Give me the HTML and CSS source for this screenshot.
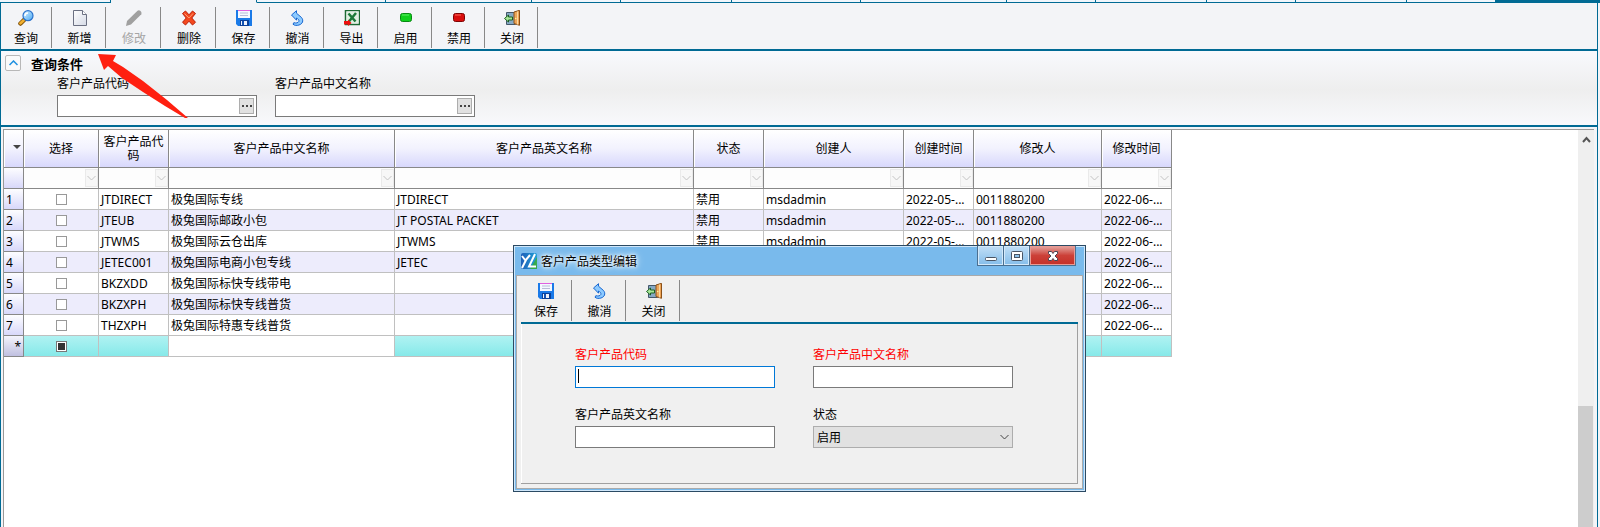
FILE: index.html
```html
<!DOCTYPE html>
<html lang="zh-CN">
<head>
    <meta charset="UTF-8">
    <meta name="viewport" content="width=device-width, initial-scale=1.0">
    <title>客户产品类型</title>
    <link rel="stylesheet" href="styles.css">
</head>
<body>
    <!-- 图标定义 -->
    <svg class="icon-defs" aria-hidden="true">
        <defs>
            <linearGradient id="g-blue" x1="0" y1="0" x2="1" y2="1">
                <stop offset="0" stop-color="#d8f2ff"/>
                <stop offset="1" stop-color="#4aa8f4"/>
            </linearGradient>
            <linearGradient id="g-page" x1="0" y1="0" x2="1" y2="1">
                <stop offset="0" stop-color="#fff"/>
                <stop offset="1" stop-color="#d5dae6"/>
            </linearGradient>
            <linearGradient id="g-logo" x1="0" y1="0" x2="1" y2="0">
                <stop offset="0" stop-color="#1f5fb8"/>
                <stop offset="1" stop-color="#1e9fd8"/>
            </linearGradient>
        </defs>
        <symbol id="i-search" viewBox="0 0 16 16">
            <path d="M6 10l-3.500 3.500" stroke="#7a4a00" stroke-width="4.500" stroke-linecap="round"/>
            <path d="M5.500 10.500L2.500 13.300" stroke="#f0b030" stroke-width="2.800" stroke-linecap="round"/>
            <circle cx="10" cy="5.700" r="5" fill="url(#g-blue)" stroke="#2a72cc" stroke-width="1.200"/>
            <path d="M7 6a3 3 0 0 1 3-3" stroke="#fff" stroke-width="1.500" fill="none"/>
        </symbol>
        <symbol id="i-new" viewBox="0 0 16 16">
            <path d="M1.500.5h9l4 4v11h-13z" fill="url(#g-page)" stroke="#6b7082"/>
            <path d="M10.500.5v4h4" fill="#fff" stroke="#6b7082"/>
        </symbol>
        <symbol id="i-edit" viewBox="0 0 16 16">
            <path d="M0 16l1-5L11.500.7q1.500-1 3 .3t.8 3.200L5 14.600z" fill="#a0a0a0"/>
        </symbol>
        <symbol id="i-delete" viewBox="0 0 16 16">
            <path d="M1.500 3.500l3-2.500L8 4.800 11.500 1l3 2.500L10.800 8l3.700 4.300-3 2.700L8 11.200 4.500 15l-3-2.700L5.200 8z" fill="#f4481e" stroke="#b8200a"/>
            <path d="M3.500 3.500L8 8l4-4.500" stroke="#ff9a70" fill="none"/>
        </symbol>
        <symbol id="i-save" viewBox="0 0 16 16">
            <path d="M0 0h16v16H2l-2-2z" fill="#1a7ae8"/>
            <path d="M2 0h12v8H2z" fill="#f4f8ff"/>
            <path d="M2 0h12v1H2z" fill="#e060e0"/>
            <path d="M4 3h8M4 5.500h8" stroke="#b8bcd8"/>
            <path d="M4 10h9v6H4z" fill="#0b3f98"/>
            <path d="M5 11h6v4H5z" fill="#eef2fb"/>
            <path d="M6 11h2v4H6z" fill="#1252b4"/>
        </symbol>
        <symbol id="i-undo" viewBox="0 0 16 16">
            <path d="M1.500 5L6.500.7v2.500l5 4.300c2.500 3 1 6.500-2.500 7.500-2.300.7-4.500.6-6-.8l.8-1.500c2.200.6 4.400.2 5-1.200.5-1.300-.5-2.500-2.300-3.500v2.200z" fill="#8ccaff" stroke="#1766d0"/>
        </symbol>
        <symbol id="i-export" viewBox="0 0 16 16">
            <path d="M1.500.5h14v14h-14z" fill="#fff" stroke="#1c6a34" stroke-width="1.500"/>
            <path d="M3 2h11v11H3z" fill="#dff0e2"/>
            <path d="M4.500 3.500l7 8M12 3l-7.500 9" stroke="#1c7a3a" stroke-width="2.500"/>
            <path d="M0 11h4V9.500l3.500 3.500L4 16v-1.500H0z" fill="#f01010"/>
        </symbol>
        <symbol id="i-enable" viewBox="0 0 16 16">
            <rect x="2.500" y="3.500" width="11" height="8" rx="2" fill="#0fd01c" stroke="#078a12"/>
            <path d="M4 5h7" stroke="#5df065"/>
        </symbol>
        <symbol id="i-disable" viewBox="0 0 16 16">
            <rect x="2.500" y="3.500" width="11" height="8" rx="2" fill="#d80d0d" stroke="#7e0404"/>
            <path d="M4 5h6" stroke="#ff6a5a"/>
        </symbol>
        <symbol id="i-close" viewBox="0 0 16 16">
            <path d="M2.500 2.500h9v12h-9z" fill="#86a9c4" stroke="#44586a"/>
            <path d="M.5 8.500L4.500 5v2h4v3h-4v2z" fill="#a8e89a" stroke="#1c5f20"/>
            <path d="M10 2l5.500-1.700v15L10 13.500z" fill="#eda558" stroke="#8a5018"/>
            <path d="M13.500 1.500v13" stroke="#fbd8a0"/>
            <circle cx="11.700" cy="8.500" r=".8" fill="#fff2a0"/>
        </symbol>
        <symbol id="i-chevron" viewBox="0 0 9 6">
            <path d="M.5 1l4 4 4-4" fill="none" stroke="currentColor"/>
        </symbol>
    </svg>

    <nav class="tab-strip" aria-label="页签">
        <span class="tab"></span>
        <span class="tab tab-xl tab-current"></span>
        <span class="tab tab-l"></span>
        <span class="tab tab-xl"></span>
        <span class="tab tab-s"></span>
        <span class="tab"></span>
        <span class="tab tab-l"></span>
        <span class="tab tab-xl"></span>
        <span class="tab tab-s"></span>
        <span class="tab"></span>
        <span class="tab tab-s"></span>
        <span class="tab"></span>
        <span class="tab tab-s"></span>
        <span class="tab-rest"></span>
    </nav>

    <div class="window">
        <div class="toolbar main-toolbar">
            <button class="tool-btn"><svg class="icon"><use href="#i-search"/></svg>查询</button>
            <button class="tool-btn"><svg class="icon"><use href="#i-new"/></svg>新增</button>
            <button class="tool-btn wide" disabled><svg class="icon"><use href="#i-edit"/></svg>修改</button>
            <button class="tool-btn wide"><svg class="icon"><use href="#i-delete"/></svg>删除</button>
            <button class="tool-btn"><svg class="icon"><use href="#i-save"/></svg>保存</button>
            <button class="tool-btn"><svg class="icon"><use href="#i-undo"/></svg>撤消</button>
            <button class="tool-btn"><svg class="icon"><use href="#i-export"/></svg>导出</button>
            <button class="tool-btn"><svg class="icon"><use href="#i-enable"/></svg>启用</button>
            <button class="tool-btn narrow"><svg class="icon"><use href="#i-disable"/></svg>禁用</button>
            <button class="tool-btn narrow"><svg class="icon"><use href="#i-close"/></svg>关闭</button>
        </div>

        <section class="query-panel">
            <button class="collapse-btn" aria-label="收起"><svg class="collapse-icon" viewBox="0 0 9 6"><path d="M.5 5l4-4 4 4" fill="none" stroke="#1e90e0" stroke-width="1.500"/></svg></button>
            <div class="query-body">
                <h2>查询条件</h2>
                <form class="query-form">
                    <div class="field">
                        <label for="q-code">客户产品代码</label>
                        <div class="lookup">
                            <input type="text" id="q-code">
                            <button type="button" class="lookup-btn" aria-label="选择"><i></i><i></i><i></i></button>
                        </div>
                    </div>
                    <div class="field">
                        <label for="q-name">客户产品中文名称</label>
                        <div class="lookup">
                            <input type="text" id="q-name">
                            <button type="button" class="lookup-btn" aria-label="选择"><i></i><i></i><i></i></button>
                        </div>
                    </div>
                </form>
            </div>
        </section>

        <div class="grid">
            <div class="grid-view">
                <table class="grid-table">
                    <colgroup>
                        <col class="col-no">
                        <col class="col-select">
                        <col class="col-short">
                        <col class="col-name">
                        <col class="col-english">
                        <col class="col-short">
                        <col class="col-creator">
                        <col class="col-short">
                        <col class="col-modifier">
                        <col class="col-short">
                    </colgroup>
                    <thead>
                        <tr class="head-row">
                            <th><span class="menu-mark"></span></th>
                            <th>选择</th>
                            <th>客户产品代码</th>
                            <th>客户产品中文名称</th>
                            <th>客户产品英文名称</th>
                            <th>状态</th>
                            <th>创建人</th>
                            <th>创建时间</th>
                            <th>修改人</th>
                            <th>修改时间</th>
                        </tr>
                        <tr class="filter-row">
                            <th></th>
                            <td><button class="filter-btn" aria-label="筛选"><svg><use href="#i-chevron"/></svg></button></td>
                            <td><button class="filter-btn" aria-label="筛选"><svg><use href="#i-chevron"/></svg></button></td>
                            <td><button class="filter-btn" aria-label="筛选"><svg><use href="#i-chevron"/></svg></button></td>
                            <td><button class="filter-btn" aria-label="筛选"><svg><use href="#i-chevron"/></svg></button></td>
                            <td><button class="filter-btn" aria-label="筛选"><svg><use href="#i-chevron"/></svg></button></td>
                            <td><button class="filter-btn" aria-label="筛选"><svg><use href="#i-chevron"/></svg></button></td>
                            <td><button class="filter-btn" aria-label="筛选"><svg><use href="#i-chevron"/></svg></button></td>
                            <td><button class="filter-btn" aria-label="筛选"><svg><use href="#i-chevron"/></svg></button></td>
                            <td><button class="filter-btn" aria-label="筛选"><svg><use href="#i-chevron"/></svg></button></td>
                        </tr>
                    </thead>
                    <tbody>
                        <tr><th>1</th><td class="check"><input type="checkbox" aria-label="选择"></td><td>JTDIRECT</td><td>极兔国际专线</td><td>JTDIRECT</td><td>禁用</td><td>msdadmin</td><td>2022-05-...</td><td>0011880200</td><td>2022-06-...</td></tr>
                        <tr><th>2</th><td class="check"><input type="checkbox" aria-label="选择"></td><td>JTEUB</td><td>极兔国际邮政小包</td><td>JT POSTAL PACKET</td><td>禁用</td><td>msdadmin</td><td>2022-05-...</td><td>0011880200</td><td>2022-06-...</td></tr>
                        <tr><th>3</th><td class="check"><input type="checkbox" aria-label="选择"></td><td>JTWMS</td><td>极兔国际云仓出库</td><td>JTWMS</td><td>禁用</td><td>msdadmin</td><td>2022-05-...</td><td>0011880200</td><td>2022-06-...</td></tr>
                        <tr><th>4</th><td class="check"><input type="checkbox" aria-label="选择"></td><td>JETEC001</td><td>极兔国际电商小包专线</td><td>JETEC</td><td></td><td></td><td></td><td></td><td>2022-06-...</td></tr>
                        <tr><th>5</th><td class="check"><input type="checkbox" aria-label="选择"></td><td>BKZXDD</td><td>极兔国际标快专线带电</td><td></td><td></td><td></td><td></td><td></td><td>2022-06-...</td></tr>
                        <tr><th>6</th><td class="check"><input type="checkbox" aria-label="选择"></td><td>BKZXPH</td><td>极兔国际标快专线普货</td><td></td><td></td><td></td><td></td><td></td><td>2022-06-...</td></tr>
                        <tr><th>7</th><td class="check"><input type="checkbox" aria-label="选择"></td><td>THZXPH</td><td>极兔国际特惠专线普货</td><td></td><td></td><td></td><td></td><td></td><td>2022-06-...</td></tr>
                        <tr class="new-row"><th>*</th><td class="check"><input type="checkbox" class="mixed" aria-label="选择"></td><td></td><td class="current"></td><td></td><td></td><td></td><td></td><td></td><td></td></tr>
                    </tbody>
                </table>
            </div>
            <div class="scrollbar">
                <svg class="scroll-up" viewBox="0 0 9 7"><path d="M1 6l3.500-4L8 6" fill="none" stroke="#555" stroke-width="2"/></svg>
                <div class="scroll-thumb"></div>
            </div>
        </div>
    </div>

    <!-- 指向“新增”的箭头 -->
    <svg class="arrow" viewBox="0 0 92 66" aria-hidden="true">
        <path d="M1 1L19 2 16 8 26 14 46 28 70 47 91 65 88 65 68 53 46 39 25 25 11 13 7 17z" fill="#ff2010"/>
    </svg>

    <!-- 编辑窗口 -->
    <div class="dialog" role="dialog" aria-labelledby="dialog-title">
        <div class="title-bar">
            <svg class="logo" viewBox="0 0 16 16">
                <rect width="16" height="16" rx="2" fill="url(#g-logo)"/>
                <path d="M16 4v12H9z" fill="#35a84a"/>
                <path d="M1 3l3.500 4.500L9 2M5 7L1 15" stroke="#fff" stroke-width="2" fill="none"/>
                <path d="M14 1L8 13.500h7" stroke="#fff" stroke-width="2" fill="none"/>
            </svg>
            <span class="dialog-title" id="dialog-title">客户产品类型编辑</span>
            <div class="window-btns">
                <button class="win-btn" aria-label="最小化"><svg viewBox="0 0 14 12"><rect x="1.500" y="7.500" width="11" height="3" rx="1" fill="#fff" stroke="#4a5564"/></svg></button>
                <button class="win-btn" aria-label="最大化"><svg viewBox="0 0 14 12"><rect x="1.500" y="1.500" width="11" height="9" rx="1" fill="#fff" stroke="#4a5564"/><rect x="4.500" y="4.500" width="5" height="3" fill="#8ec2ea" stroke="#4a5564"/></svg></button>
                <button class="win-btn win-close" aria-label="关闭"><svg viewBox="0 0 14 12"><path d="M2.500 1.500h3L7 3.500l1.500-2h3v2L9 6l2.500 2.500v2h-3L7 8.500l-1.500 2h-3v-2L5 6 2.500 3.500z" fill="#fff" stroke="#4a4654"/></svg></button>
            </div>
        </div>
        <div class="dialog-body">
            <div class="toolbar">
                <button class="tool-btn"><svg class="icon"><use href="#i-save"/></svg>保存</button>
                <button class="tool-btn"><svg class="icon"><use href="#i-undo"/></svg>撤消</button>
                <button class="tool-btn"><svg class="icon"><use href="#i-close"/></svg>关闭</button>
            </div>
            <form class="edit-form">
                <div class="field required focused">
                    <label for="e-code">客户产品代码</label>
                    <input type="text" id="e-code">
                </div>
                <div class="field required">
                    <label for="e-name">客户产品中文名称</label>
                    <input type="text" id="e-name">
                </div>
                <div class="field">
                    <label for="e-english">客户产品英文名称</label>
                    <input type="text" id="e-english">
                </div>
                <div class="field">
                    <label for="e-status">状态</label>
                    <div class="select-box">
                        <select id="e-status">
                            <option>启用</option>
                        </select>
                        <svg class="select-arrow"><use href="#i-chevron"/></svg>
                    </div>
                </div>
            </form>
        </div>
    </div>
</body>
</html>
```
FILE: styles.css
```css
* {
    box-sizing: border-box;
    margin: 0;
    padding: 0;
}

body {
    display: flex;
    flex-direction: column;
    height: 100vh;
    overflow: hidden;
    background-color: #f3f4f7;
    color: #000;
    font-family: "Noto Sans", "Noto Sans CJK SC", sans-serif;
    font-size: 12px;
    line-height: 14px;
}

button, input, select {
    font: inherit;
    color: inherit;
}

.icon-defs {
    position: absolute;
    width: 0;
    height: 0;
}

/* 页签 */
.tab-strip {
    display: flex;
    flex: none;
    height: 3px;
}

.tab {
    flex: 0 1 111px;
    border: solid #006a94;
    border-width: 0 1px 1px 0;
    background-color: #f0f6fc;
}

.tab-s {
    flex-basis: 89px;
}

.tab-l {
    flex-basis: 129px;
}

.tab-xl {
    flex-basis: 146px;
}

.tab-current {
    border-bottom-color: #f3f4f7;
    background-color: #f3f4f7;
}

.tab-rest {
    flex: 1;
    background-color: #006a94;
}

.window {
    display: flex;
    flex: 1;
    flex-direction: column;
    min-height: 0;
    margin-right: 2px;
    border: solid #006a94;
    border-width: 0 1px;
}

/* 工具栏 */
.toolbar {
    display: flex;
    flex: none;
    padding: 4px 0 1px;
    border-bottom: 2px solid #006a94;
}

.tool-btn {
    display: flex;
    flex-direction: column;
    align-items: center;
    gap: 6px;
    width: 54px;
    height: 41px;
    padding: 3px 0 0 2px;
    border: none;
    border-right: 1px solid #888;
    background: none;
}

.tool-btn:first-child {
    width: 51px;
    padding-left: 0;
}

.tool-btn.wide {
    width: 55px;
}

.tool-btn.narrow {
    width: 53px;
}

.tool-btn:disabled {
    color: #a5a5a5;
}

.icon {
    flex: none;
    width: 16px;
    height: 16px;
}

/* 查询条件 */
.query-panel {
    display: flex;
    flex: none;
    gap: 10px;
    padding: 4px;
    height: 76px;
    border-bottom: 2px solid #006a94;
    background: linear-gradient(#f8f9fd, #eee 52%, #f8f9fc);
}

.collapse-btn {
    display: flex;
    align-items: center;
    justify-content: center;
    width: 16px;
    height: 16px;
    border: 1px solid #b8b8b8;
    border-radius: 2px;
    background-color: #fafafa;
}

.collapse-icon {
    width: 9px;
    height: 6px;
}

.query-body h2 {
    padding-top: 1px;
    font-size: 13px;
    line-height: 16px;
}

.query-form {
    display: flex;
    gap: 18px;
    padding: 5px 0 0 26px;
}

.field {
    display: flex;
    flex-direction: column;
    gap: 4px;
    width: 200px;
}

.field input {
    width: 100%;
    height: 22px;
    padding: 0 3px;
    border: 1px solid #7a7a7a;
    background-color: #fff;
}

.lookup {
    display: flex;
    align-items: center;
    border: 1px solid #7a7a7a;
    background-color: #fff;
    height: 22px;
    padding-right: 2px;
}

.lookup input {
    flex: 1;
    width: 0;
    height: 20px;
    border: none;
}

.lookup-btn {
    display: flex;
    align-items: center;
    justify-content: center;
    gap: 2px;
    width: 15px;
    height: 16px;
    border: 1px solid #adadad;
    background-color: #e1e1e1;
}

.lookup-btn i {
    width: 2px;
    height: 2px;
    background-color: #444;
}

/* 表格 */
.grid {
    display: flex;
    flex: 1;
    min-height: 0;
    margin: 2px 3px 0 2px;
    border: solid #999;
    border-width: 1px 0 0 1px;
    background-color: #fff;
}

.grid-view {
    flex: 1;
    overflow: hidden;
}

.grid-table {
    width: 1168px;
    table-layout: fixed;
    border-collapse: separate;
    border-spacing: 0;
}

.col-no { width: 20px; }
.col-select { width: 75px; }
.col-short { width: 70px; }
.col-name { width: 226px; }
.col-english { width: 299px; }
.col-creator { width: 140px; }
.col-modifier { width: 128px; }

.grid-table td,
.grid-table th {
    height: 21px;
    padding: 2px 2px 0;
    border: solid #c0c0c0;
    border-width: 0 1px 1px 0;
    font-weight: normal;
    white-space: nowrap;
}

.grid-table th {
    border-color: #888;
    text-align: left;
    background: linear-gradient(#fdfdff, #d8d8fa);
}

.grid-table .head-row th {
    height: 38px;
    padding: 1px 3px 0;
    text-align: center;
    white-space: normal;
    background: linear-gradient(#fff, #f2f2fe 50%, #d8d8fc);
    box-shadow: inset 1px 0 #fff;
}

.menu-mark {
    display: block;
    margin: 0 0 4px 6px;
    border: solid transparent;
    border-width: 4px 4px 0;
    border-top-color: #444;
}

.grid-table .filter-row td {
    padding: 0;
    border-color: #888;
    background-color: #fdfdfd;
}

.filter-btn {
    display: flex;
    align-items: center;
    justify-content: center;
    width: 13px;
    height: 18px;
    margin-left: auto;
    border: 1px solid #eaeaea;
    background-color: #f7f7f7;
    color: #c4c4c4;
}

.filter-btn svg {
    flex: none;
    width: 9px;
    height: 6px;
}

.grid-table tbody tr:nth-child(even) td {
    background-color: #edecfc;
}

.grid-table .check {
    padding: 0 2px;
}

.check input {
    display: block;
    appearance: none;
    width: 11px;
    height: 11px;
    margin: 0 auto;
    border: 1px solid #999;
    background-color: #fff;
}

.check .mixed {
    border-color: #777;
    background: #333 content-box;
    padding: 1px;
    box-shadow: inset 0 0 0 1px #fff;
}

.grid-table .new-row td {
    background: linear-gradient(#b0f2f2, #86e9e9);
}

.grid-table tbody .new-row .current {
    background: #fff;
}

.grid-table .new-row th {
    text-align: right;
    background: linear-gradient(#f4f4fc, #c0c0e0);
}

.scrollbar {
    display: flex;
    flex: none;
    flex-direction: column;
    align-items: center;
    justify-content: space-between;
    width: 16px;
    padding-top: 6px;
    background-color: #efefef;
}

.scroll-up {
    width: 9px;
    height: 7px;
}

.scroll-thumb {
    width: 100%;
    height: 31%;
    border-right: 1px solid #efefef;
    background-color: #cdcdcd;
}

.arrow {
    position: absolute;
    left: 97px;
    top: 53px;
    width: 92px;
    height: 66px;
}

/* 编辑窗口 */
.dialog {
    position: absolute;
    left: 513px;
    top: 245px;
    display: flex;
    flex-direction: column;
    width: 573px;
    padding: 1px;
    border: 1px solid #2b4a63;
    background-color: #79baec;
    box-shadow: inset 0 0 0 1px #d0e7fa;
}

.title-bar {
    display: flex;
    align-items: center;
    gap: 4px;
    height: 28px;
    padding-left: 6px;
}

.logo {
    width: 16px;
    height: 16px;
}

.dialog-title {
    padding-top: 1px;
    text-shadow: 0 0 3px #fff, 0 0 5px #fff, 0 0 8px #fff;
}

.window-btns {
    display: flex;
    align-self: flex-start;
    height: 20px;
    margin: -1px 8px 0 auto;
    border: 1px solid #4a6f90;
    border-top: none;
}

.win-btn {
    display: flex;
    align-items: center;
    justify-content: center;
    width: 26px;
    border: none;
    border-right: 1px solid #4a6f90;
    background: linear-gradient(#c2dff6, #84bdea);
    box-shadow: inset 0 0 0 1px #d4e9fa;
}

.win-btn svg {
    width: 14px;
    height: 12px;
}

.win-close {
    width: 45px;
    border: none;
    background: linear-gradient(#e5a8a2, #cc4038 50%, #c43028);
    box-shadow: inset 0 0 0 1px #e89a94;
}

.dialog-body {
    margin: 0 1px 1px;
    padding: 4px;
    padding-top: 0;
    border: 1px solid #aaa;
    background-color: #f0f0f0;
}

.edit-form {
    display: grid;
    grid-template-columns: 200px 200px;
    gap: 20px 38px;
    padding: 24px 53px 35px 54px;
    border: solid #a0a0a0;
    border-width: 0 1px 1px 0;
    box-shadow: inset 1px 0 #fff;
}

.required label {
    color: #f00;
}

.focused {
    position: relative;
}

.focused input {
    border-color: #0078d7;
}

.focused::after {
    content: "";
    position: absolute;
    left: 3px;
    bottom: 5px;
    width: 1px;
    height: 14px;
    background-color: #000;
}

.select-box {
    display: flex;
    position: relative;
}

.select-box select {
    appearance: none;
    width: 100%;
    height: 22px;
    padding: 2px 3px 0;
    border: 1px solid #adadad;
    border-radius: 0;
    background-color: #e1e1e1;
}

.select-arrow {
    position: absolute;
    right: 4px;
    top: 8px;
    width: 9px;
    height: 6px;
    color: #444;
    pointer-events: none;
}
```
